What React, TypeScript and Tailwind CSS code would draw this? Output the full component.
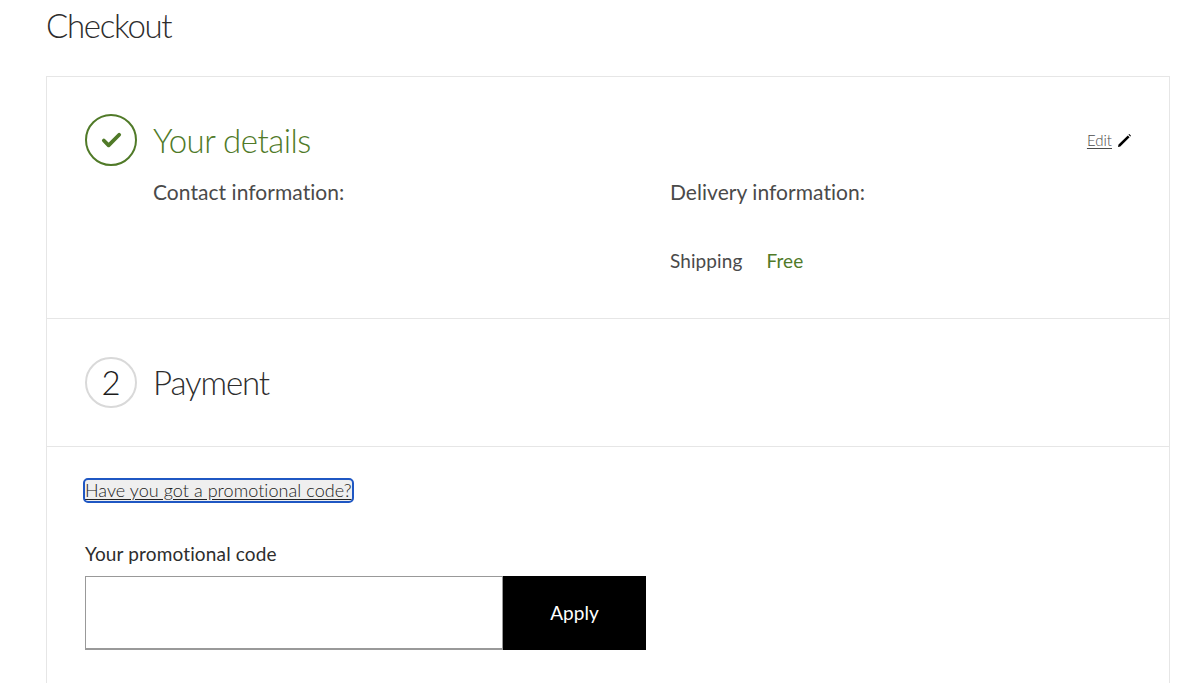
import { Check } from 'lucide-react';

const font = { fontFamily: 'Lato, "Noto Sans", sans-serif' };

export default function App() {
  return (
    <div style={font} className="h-[683px] w-[1200px] overflow-hidden bg-white pl-[46px] pr-[30px]">
      <h1 className="h-[76px] pt-[4px] text-[33px] leading-[42px] font-light tracking-[-1.3px] text-[#2d2d2d]">Checkout</h1>

      <div className="h-[620px] border border-[#e6e6e6]">
        <section className="h-[242px] border-b border-[#e6e6e6] pt-[37px] pr-[37px] pl-[38px]">
          <div className="flex items-center justify-between">
            <div className="flex items-center gap-[16px]">
              <div className="flex h-[52px] w-[52px] items-center justify-center rounded-full border-[2.5px] border-[#507a28]">
                <Check size={23} strokeWidth={4} className="text-[#507a28]" />
              </div>
              <h2 className="text-[33px] leading-[52px] font-light tracking-[-0.5px] text-[#507a28]">Your details</h2>
            </div>
            <a className="flex items-center gap-[5px] text-[15px] font-light text-[#4a4a4a]">
              <span className="underline underline-offset-2">Edit</span>
              <svg width="15" height="15" viewBox="0 0 15 15" className="text-black">
                <path d="M1 14l.5-2.4L10.8 2.4l1.8 1.8-9.3 9.3z M11.6 1.6l.7-.6 1.7 1.7-.6.7-.1.1-1.8-1.8z" fill="currentColor" />
              </svg>
            </a>
          </div>
          <div className="mt-[10px] flex pl-[68px]">
            <div className="w-[517px] text-[21px] leading-[32px] tracking-[0.05px] text-[#4a4a4a]">Contact information:</div>
            <div>
              <div className="text-[21px] leading-[32px] tracking-[0.05px] text-[#4a4a4a]">Delivery information:</div>
              <div className="mt-[37px] flex gap-[24px] text-[19px] leading-[32px] tracking-[0.1px]">
                <span className="text-[#4a4a4a]">Shipping</span>
                <span className="text-[#507a28]">Free</span>
              </div>
            </div>
          </div>
        </section>

        <section className="h-[128px] border-b border-[#e6e6e6] pt-[38px] pl-[38px]">
          <div className="flex items-center gap-[16px]">
            <div className="flex h-[51px] w-[52px] items-center justify-center rounded-full border-2 border-[#d9d9d9] text-[33px] font-light text-[#1c1c1c]">
              2
            </div>
            <h2 className="mb-[2px] text-[33px] leading-[48px] font-light tracking-[-1.1px] text-[#2d2d2d]">Payment</h2>
          </div>
        </section>

        <section className="pt-[32px] pl-[38px]">
          <a className="inline-block rounded-[3px] bg-[#efefef] text-[18px] leading-[21px] font-light tracking-[0.06px] text-[#222222] underline underline-offset-2 outline-2 outline-[#1f57c3]">
            Have you got a promotional code?
          </a>
          <label className="mt-[37px] block text-[19px] leading-[28px] tracking-[0.15px] text-[#2d2d2d]">Your promotional code</label>
          <div className="mt-[8px] flex">
            <input className="h-[74px] w-[418px] border border-b-2 border-[#999999] bg-white" />
            <button className="h-[74px] w-[143px] bg-black pt-[1px] text-[19px] text-white">Apply</button>
          </div>
        </section>
      </div>
    </div>
  );
}
